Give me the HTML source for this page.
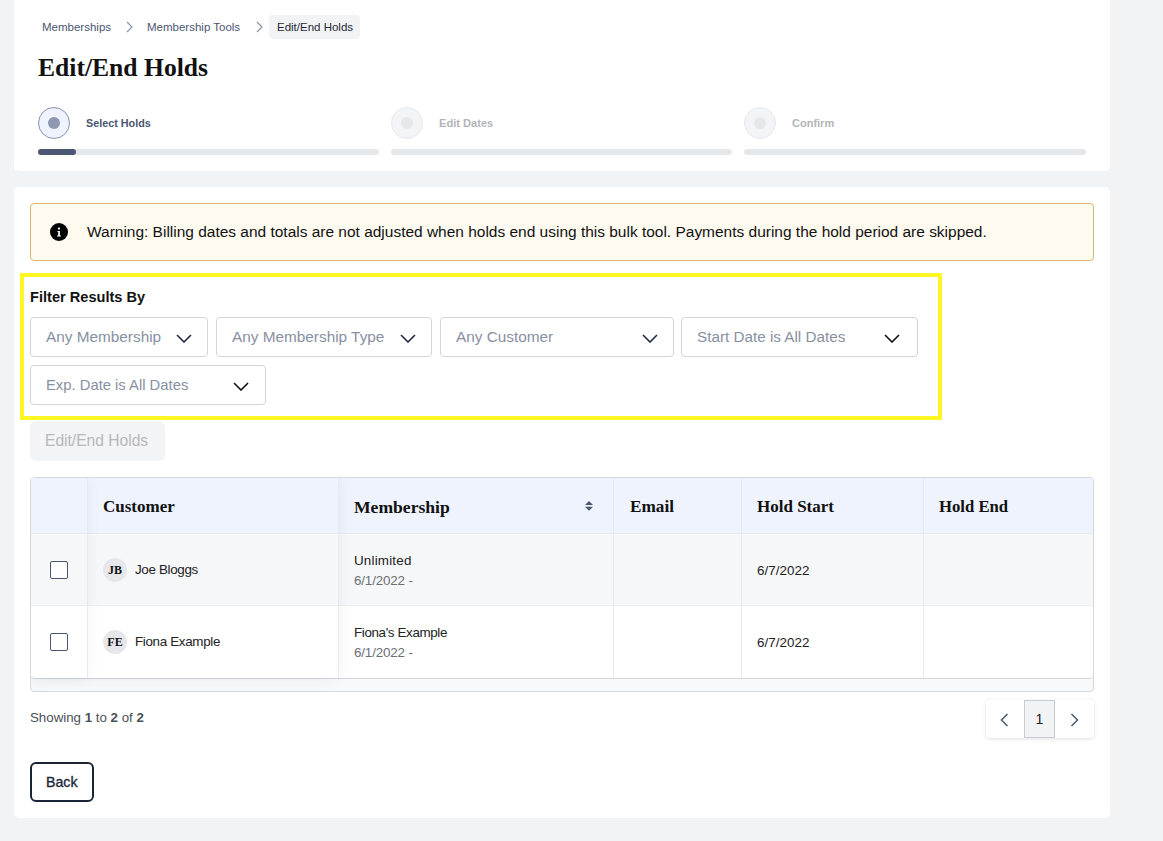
<!DOCTYPE html>
<html><head><meta charset="utf-8">
<style>
*{box-sizing:border-box;margin:0;padding:0}
html,body{width:1163px;height:841px;overflow:hidden;background:#f2f3f5;font-family:"Liberation Sans",sans-serif;color:#222}
.abs{position:absolute}
.card{position:absolute;background:#fff;border-radius:5px}
.crumb{position:absolute;font-size:11.5px;color:#4a5673;white-space:nowrap;line-height:14px}
.chev{position:absolute}
.title{position:absolute;left:38px;top:53px;font-family:"Liberation Serif",serif;font-weight:700;font-size:25.6px;color:#111;white-space:nowrap;line-height:30px}
.step-c{position:absolute;width:32px;height:32px;border-radius:50%}
.step-d{position:absolute;width:12px;height:12px;border-radius:50%;left:9px;top:9px}
.step-t{position:absolute;font-weight:700;font-size:10.8px;white-space:nowrap;line-height:13px}
.track{position:absolute;height:6px;border-radius:3px;background:#e6e7eb;top:149px}
.dd{position:absolute;height:40px;border:1px solid #d2d5d9;border-radius:4px;background:#fff}
.dd span{position:absolute;left:15px;top:9.5px;font-size:15.35px;color:#8790a2;white-space:nowrap;line-height:18px}
.dd svg{position:absolute;top:15.5px}
.th{position:absolute;top:497px;font-family:"Liberation Serif",serif;font-weight:700;font-size:17px;color:#111;white-space:nowrap;line-height:20px}
.td{position:absolute;font-size:12.7px;color:#222;white-space:nowrap;line-height:15px}
.vsep{position:absolute;width:1px;background:#e8e9ec}
</style></head><body>

<!-- top card -->
<div class="card" style="left:14px;top:-5px;width:1096px;height:176px"></div>
<div class="crumb" style="left:42px;top:20px">Memberships</div>
<svg class="chev" style="left:126px;top:21px" width="7" height="12" viewBox="0 0 7 12"><path d="M1 1 L6 6 L1 11" fill="none" stroke="#8a94ad" stroke-width="1.2"/></svg>
<div class="crumb" style="left:147px;top:20px">Membership Tools</div>
<svg class="chev" style="left:256px;top:21px" width="7" height="12" viewBox="0 0 7 12"><path d="M1 1 L6 6 L1 11" fill="none" stroke="#8a94ad" stroke-width="1.2"/></svg>
<div class="abs" style="left:269px;top:15px;width:91px;height:24px;background:#f2f3f5;border-radius:4px"></div>
<div class="crumb" style="left:277px;top:20px;color:#1f2937">Edit/End Holds</div>

<div class="title">Edit/End Holds</div>

<!-- stepper -->
<div class="step-c" style="left:38px;top:107px;background:#eef3fd;border:1px solid #8a94ad"><div class="step-d" style="left:9px;top:9px;background:#8e99b0"></div></div>
<div class="step-t" style="left:86px;top:117px;color:#4a5673">Select Holds</div>
<div class="step-c" style="left:391px;top:107px;background:#f3f4f6;border:1px solid #e8e9ec"><div class="step-d" style="background:#e6e7ea"></div></div>
<div class="step-t" style="left:439px;top:117px;color:#b3b5ba;font-size:11.1px">Edit Dates</div>
<div class="step-c" style="left:744px;top:107px;background:#f3f4f6;border:1px solid #e8e9ec"><div class="step-d" style="background:#e6e7ea"></div></div>
<div class="step-t" style="left:792px;top:117px;color:#b3b5ba;font-size:11px">Confirm</div>
<div class="track" style="left:38px;width:341px"></div>
<div class="track" style="left:38px;width:38px;background:#4a5673"></div>
<div class="track" style="left:391px;width:341px"></div>
<div class="track" style="left:744px;width:342px"></div>

<!-- main card -->
<div class="card" style="left:14px;top:187px;width:1096px;height:631px"></div>

<!-- warning -->
<div class="abs" style="left:30px;top:203px;width:1064px;height:58px;background:#fefaf0;border:1px solid #d9b86c;border-radius:4px"></div>
<svg class="abs" style="left:50px;top:223px" width="18" height="18" viewBox="0 0 18 18"><circle cx="9" cy="9" r="9" fill="#000"/><circle cx="9" cy="5.6" r="1.15" fill="#fff"/><path d="M7.4 7.9 H9.9 V12.4 H10.9 V13.5 H7.1 V12.4 H8.2 V9 H7.4 Z" fill="#fff"/></svg>
<div class="abs" style="left:87px;top:222.5px;font-size:15.47px;color:#111;white-space:nowrap;line-height:18px">Warning: Billing dates and totals are not adjusted when holds end using this bulk tool. Payments during the hold period are skipped.</div>

<!-- yellow filter box -->
<div class="abs" style="left:20px;top:273px;width:922px;height:147px;border:4px solid #fff724"></div>
<div class="abs" style="left:30px;top:288px;font-weight:700;font-size:14.6px;color:#111;white-space:nowrap;line-height:18px">Filter Results By</div>

<div class="dd" style="left:30px;top:317px;width:178px"><span>Any Membership</span><svg style="left:145px" width="16" height="9" viewBox="0 0 16 9"><path d="M1 1 L8 8 L15 1" fill="none" stroke="#1f2a44" stroke-width="1.6"/></svg></div>
<div class="dd" style="left:216px;top:317px;width:216px"><span>Any Membership Type</span><svg style="left:183px" width="16" height="9" viewBox="0 0 16 9"><path d="M1 1 L8 8 L15 1" fill="none" stroke="#1f2a44" stroke-width="1.6"/></svg></div>
<div class="dd" style="left:440px;top:317px;width:234px"><span>Any Customer</span><svg style="left:201px" width="16" height="9" viewBox="0 0 16 9"><path d="M1 1 L8 8 L15 1" fill="none" stroke="#1f2a44" stroke-width="1.6"/></svg></div>
<div class="dd" style="left:681px;top:317px;width:237px"><span style="font-size:15.25px">Start Date is All Dates</span><svg style="left:202px" width="16" height="9" viewBox="0 0 16 9"><path d="M1 1 L8 8 L15 1" fill="none" stroke="#111" stroke-width="1.6"/></svg></div>
<div class="dd" style="left:30px;top:365px;width:236px"><span style="font-size:14.8px">Exp. Date is All Dates</span><svg style="left:202px" width="16" height="9" viewBox="0 0 16 9"><path d="M1 1 L8 8 L15 1" fill="none" stroke="#111" stroke-width="1.6"/></svg></div>

<!-- disabled button -->
<div class="abs" style="left:30px;top:421px;width:135px;height:40px;background:#f3f4f6;border-radius:6px"></div>
<div class="abs" style="left:45px;top:432px;font-size:15.6px;color:#b5b7bb;white-space:nowrap;line-height:18px">Edit/End Holds</div>

<!-- table -->
<div class="abs" style="left:30px;top:477px;width:1064px;height:215px;border:1px solid #d6d8dc;border-radius:4px;overflow:hidden;background:#f8f9fa">
  <div class="abs" style="left:0;top:0;width:1062px;height:201px;background:#fff;border-bottom:1px solid #d3d5d9;border-radius:0 0 4px 4px"></div>
  <div class="abs" style="left:0;top:0;width:1062px;height:56px;background:#eef3fd"></div>
  <div class="abs" style="left:0;top:56px;width:1062px;height:72px;background:#f6f7f9"></div>
  <div class="abs" style="left:0;top:55px;width:1062px;height:1px;background:#e9eaee"></div>
  <div class="abs" style="left:0;top:127px;width:1062px;height:1px;background:#eceef0"></div>
  
  <div class="abs" style="left:582px;top:0;width:1px;height:200px;background:#e8e9ec"></div>
  <div class="abs" style="left:710px;top:0;width:1px;height:200px;background:#e8e9ec"></div>
  <div class="abs" style="left:892px;top:0;width:1px;height:200px;background:#e8e9ec"></div>
  <div class="abs" style="left:0;top:0;width:307px;height:200px;box-shadow:0 0 16px rgba(40,50,80,0.075)"></div>
  <div class="abs" style="left:0;top:0;width:56px;height:200px;box-shadow:0 0 14px rgba(40,50,80,0.06)"></div>
  <div class="abs" style="left:56px;top:0;width:1px;height:200px;background:#e9eaee"></div>
  <div class="abs" style="left:307px;top:0;width:1px;height:200px;background:#e9eaee"></div>
</div>

<div class="th" style="left:103px">Customer</div>
<div class="th" style="left:354px;font-size:17.6px">Membership</div>
<svg class="abs" style="left:585px;top:500px" width="8" height="12" viewBox="0 0 8 12"><path d="M4 1 L8 4.9 H0 Z M0 6.7 H8 L4 10.8 Z" fill="#4a5673"/></svg>
<div class="th" style="left:630px;font-size:17.2px">Email</div>
<div class="th" style="left:757px">Hold Start</div>
<div class="th" style="left:939px;font-size:16.7px">Hold End</div>

<!-- row 1 -->
<div class="abs" style="left:50px;top:561px;width:18px;height:18px;border:1px solid #4a5673;border-radius:2px;background:#fff"></div>
<div class="abs" style="left:103px;top:558px;width:24px;height:24px;border-radius:50%;background:#e6e7ea;font-family:'Liberation Serif',serif;font-weight:700;font-size:12px;color:#111;text-align:center;line-height:25px">JB</div>
<div class="td" style="left:135px;top:562px;font-size:13.4px;letter-spacing:-0.33px">Joe Bloggs</div>
<div class="td" style="left:354px;top:552.5px;font-size:13.4px;letter-spacing:0.19px">Unlimited</div>
<div class="td" style="left:354px;top:573px;color:#6b6f76;font-size:13.4px;letter-spacing:-0.16px">6/1/2022 -</div>
<div class="td" style="left:757px;top:563px;font-size:13.4px;letter-spacing:0.06px">6/7/2022</div>

<!-- row 2 -->
<div class="abs" style="left:50px;top:633px;width:18px;height:18px;border:1px solid #4a5673;border-radius:2px;background:#fff"></div>
<div class="abs" style="left:103px;top:630px;width:24px;height:24px;border-radius:50%;background:#e6e7ea;font-family:'Liberation Serif',serif;font-weight:700;font-size:12px;color:#111;text-align:center;line-height:25px">FE</div>
<div class="td" style="left:135px;top:634px;font-size:13.4px;letter-spacing:-0.33px">Fiona Example</div>
<div class="td" style="left:354px;top:624.5px;font-size:13.4px;letter-spacing:-0.37px">Fiona's Example</div>
<div class="td" style="left:354px;top:645px;color:#6b6f76;font-size:13.4px;letter-spacing:-0.16px">6/1/2022 -</div>
<div class="td" style="left:757px;top:635px;font-size:13.4px;letter-spacing:0.06px">6/7/2022</div>

<!-- footer -->
<div class="abs" style="left:30px;top:710px;font-size:13.3px;color:#4b4f56;white-space:nowrap;line-height:16px">Showing <b>1</b> to <b>2</b> of <b>2</b></div>

<div class="abs" style="left:986px;top:700px;width:108px;height:38px;background:#fff;border-radius:4px;box-shadow:0 1px 4px rgba(0,0,0,0.12)"></div>
<div class="abs" style="left:1024px;top:700px;width:31px;height:38px;background:#f2f3f5;border:1px solid #c9cbcf"></div>
<div class="abs" style="left:1024px;top:711px;width:31px;font-size:14px;color:#222;text-align:center;line-height:16px">1</div>
<svg class="abs" style="left:1000px;top:713px" width="9" height="14" viewBox="0 0 9 14"><path d="M7.5 1 L1.5 7 L7.5 13" fill="none" stroke="#4a5673" stroke-width="1.5"/></svg>
<svg class="abs" style="left:1070px;top:713px" width="9" height="14" viewBox="0 0 9 14"><path d="M1.5 1 L7.5 7 L1.5 13" fill="none" stroke="#4a5673" stroke-width="1.5"/></svg>

<div class="abs" style="left:30px;top:762px;width:64px;height:40px;border:2px solid #1b2437;border-radius:6px"></div>
<div class="abs" style="left:46px;top:773.5px;font-size:14.2px;color:#1b2437;-webkit-text-stroke:0.3px #1b2437;white-space:nowrap;line-height:17px">Back</div>

</body></html>
